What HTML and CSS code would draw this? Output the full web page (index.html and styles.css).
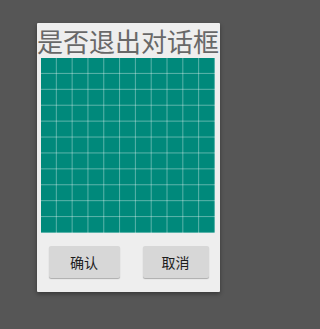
FILE: index.html
```html
<!DOCTYPE html>
<html lang="zh-CN">
<head>
<meta charset="utf-8">
<title>是否退出对话框</title>
<link rel="stylesheet" href="styles.css">
</head>
<body>
<div class="dialog">
  <div class="title">是否退出对话框</div>
  <div class="grid"></div>
  <div class="actions">
    <button class="btn btn-ok">确认</button>
    <button class="btn btn-cancel">取消</button>
  </div>
</div>
</body>
</html>
```
FILE: styles.css
```css
html, body {
  margin: 0;
  padding: 0;
}
body {
  background: #565656;
  width: 256px;
  height: 329px;
  display: flex;
  justify-content: center;
  align-items: flex-start;
  padding-top: 23px;
  box-sizing: border-box;
  font-family: "Noto Sans CJK SC", "Noto Sans", sans-serif;
}
.dialog {
  width: 183px;
  height: 269px;
  background: #eeeeee;
  border-radius: 1px;
  box-shadow: 0 2px 4px rgba(0, 0, 0, 0.35);
  display: flex;
  flex-direction: column;
  align-items: center;
}
.title {
  height: 35px;
  line-height: 35px;
  font-size: 26px;
  color: #686868;
  white-space: nowrap;
  text-align: center;
  width: 100%;
}
.grid {
  width: 174px;
  height: 175px;
  background-color: #00897b;
  background-image:
    linear-gradient(to right, transparent calc(100% - 1px), rgba(255, 255, 255, 0.36) calc(100% - 1px)),
    linear-gradient(to bottom, transparent calc(100% - 1px), rgba(255, 255, 255, 0.36) calc(100% - 1px));
  background-size: 15.82px 15.91px;
}
.actions {
  width: 100%;
  box-sizing: border-box;
  padding: 13px 11px 0 12px;
  display: flex;
  justify-content: space-between;
}
.btn {
  height: 32px;
  border: none;
  border-radius: 2px;
  background: #d7d7d7;
  box-shadow: 0 1px 1px rgba(0, 0, 0, 0.28);
  font-family: "Noto Sans CJK SC", "Noto Sans", sans-serif;
  font-size: 14px;
  color: #1c1c1c;
  padding: 0;
  line-height: 32px;
}
.btn-ok {
  width: 71px;
}
.btn-cancel {
  width: 66px;
}
```
